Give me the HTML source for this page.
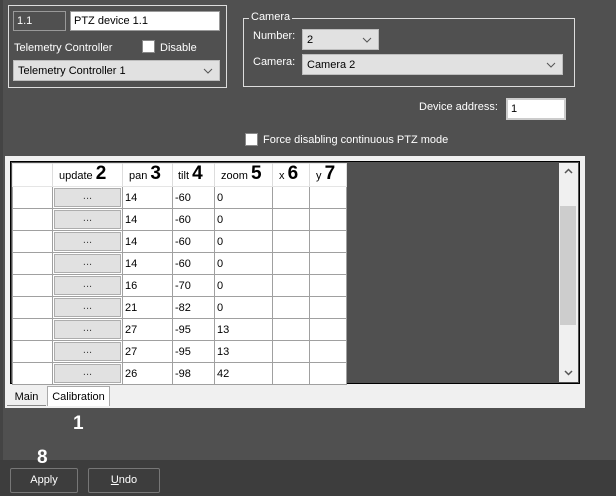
<!DOCTYPE html><html><head><style>
*{margin:0;padding:0;box-sizing:border-box}
body{width:616px;height:496px;background:#505050;position:relative;overflow:hidden;font-family:"Liberation Sans",sans-serif;font-size:11px;color:#fff}
.a{position:absolute}
.inp{position:absolute;background:#fff;border:1px solid #9a9a9a;color:#000;padding:2px 3px;font-size:11px;line-height:14px}
.cb{position:absolute;background:#e1e1e1;border:1px solid #bdbdbd;color:#000;padding:3px 4px;font-size:11px;line-height:14px}
.cb svg{position:absolute;right:6px;top:7px}
.chk{position:absolute;width:13px;height:13px;background:#fff;border:1px solid #888}
.n{position:absolute;font-weight:bold;font-size:19px;color:#000;line-height:19px}
table{border-collapse:collapse;position:absolute;left:12px;top:163px;color:#000;font-size:11px}
td{border:1px solid #a0a0a0;height:22px;background:#fff;padding:0 2px;line-height:20px}
td.b{background:#fff;padding:1px}
td.b div{background:#e1e1e1;border:1px solid #adadad;height:19px;text-align:center;color:#444;line-height:14px}
tr.h td{height:21px;line-height:19px;border-color:#e5e5e5;border-right:1px solid #ddd}
.btn{position:absolute;border:1px solid #777;background:#3d3d3d;color:#fff;text-align:center;line-height:22px;border-radius:2px}
</style></head><body>
<div class="a" style="left:0;top:0;width:3px;height:496px;background:#444"></div>
<div class="a" style="left:8px;top:5px;width:219px;height:83px;border:1px solid #ddd"></div>
<div class="inp" style="left:13px;top:11px;width:53px;height:20px;background:#505050;color:#fff;border-color:#999">1.1</div>
<div class="inp" style="left:70px;top:11px;width:150px;height:20px">PTZ device 1.1</div>
<div class="a" style="left:14px;top:42px">Telemetry Controller</div>
<div class="chk" style="left:142px;top:40px"></div>
<div class="a" style="left:160px;top:42px">Disable</div>
<div class="cb" style="left:13px;top:60px;width:207px;height:21px">Telemetry Controller 1<svg width="10" height="6"><path d="M1 1l4 4 4-4" stroke="#555" fill="none"/></svg></div>

<div class="a" style="left:243px;top:18px;width:332px;height:69px;border:1px solid #ddd"></div>
<div class="a" style="left:249px;top:11px;background:#505050;padding:0 2px">Camera</div>
<div class="a" style="left:253px;top:30px">Number:</div>
<div class="cb" style="left:302px;top:29px;width:77px;height:21px">2<svg width="10" height="6"><path d="M1 1l4 4 4-4" stroke="#555" fill="none"/></svg></div>
<div class="a" style="left:253px;top:56px">Camera:</div>
<div class="cb" style="left:302px;top:54px;width:261px;height:21px">Camera 2<svg width="10" height="6"><path d="M1 1l4 4 4-4" stroke="#555" fill="none"/></svg></div>
<div class="a" style="left:419px;top:101px">Device address:</div>
<div class="inp" style="left:506px;top:98px;width:60px;height:22px;border:2px solid #ccc">1</div>
<div class="chk" style="left:245px;top:133px"></div>
<div class="a" style="left:263px;top:134px">Force disabling continuous PTZ mode</div>

<div class="a" style="left:5px;top:156px;width:580px;height:252px;background:#f0f0f0"></div>
<div class="a" style="left:10px;top:161px;width:570px;height:223px;background:#505050;border:1px solid #000"></div>
<table>
<tr class="h"><td style="width:40px"></td><td style="width:70px;padding-left:6px">update <b style="font-size:19px">2</b></td><td style="width:50px;padding-left:6px">pan <b style="font-size:19px">3</b></td><td style="width:42px;padding-left:5px">tilt <b style="font-size:19px">4</b></td><td style="width:58px;padding-left:6px">zoom <b style="font-size:19px">5</b></td><td style="width:37px;padding-left:6px">x <b style="font-size:19px">6</b></td><td style="width:37px;padding-left:6px">y <b style="font-size:19px">7</b></td></tr>
<tr><td></td><td class="b"><div>...</div></td><td>14</td><td>-60</td><td>0</td><td></td><td></td></tr>
<tr><td></td><td class="b"><div>...</div></td><td>14</td><td>-60</td><td>0</td><td></td><td></td></tr>
<tr><td></td><td class="b"><div>...</div></td><td>14</td><td>-60</td><td>0</td><td></td><td></td></tr>
<tr><td></td><td class="b"><div>...</div></td><td>14</td><td>-60</td><td>0</td><td></td><td></td></tr>
<tr><td></td><td class="b"><div>...</div></td><td>16</td><td>-70</td><td>0</td><td></td><td></td></tr>
<tr><td></td><td class="b"><div>...</div></td><td>21</td><td>-82</td><td>0</td><td></td><td></td></tr>
<tr><td></td><td class="b"><div>...</div></td><td>27</td><td>-95</td><td>13</td><td></td><td></td></tr>
<tr><td></td><td class="b"><div>...</div></td><td>27</td><td>-95</td><td>13</td><td></td><td></td></tr>
<tr><td></td><td class="b"><div>...</div></td><td>26</td><td>-98</td><td>42</td><td></td><td></td></tr>
</table>
<div class="a" style="left:559px;top:163px;width:19px;height:219px;background:#f0f0f0"></div>
<div class="a" style="left:560px;top:206px;width:16px;height:119px;background:#cdcdcd"></div>
<svg class="a" style="left:564px;top:168px" width="9" height="6"><path d="M1 5l3.5-3.5L8 5" stroke="#555" fill="none" stroke-width="1.5"/></svg>
<svg class="a" style="left:564px;top:370px" width="9" height="6"><path d="M1 1l3.5 3.5L8 1" stroke="#555" fill="none" stroke-width="1.5"/></svg>

<div class="a" style="left:7px;top:388px;width:39px;height:18px;color:#000;text-align:center;line-height:18px;border-bottom:1px solid #888">Main</div>
<div class="a" style="left:47px;top:386px;width:63px;height:20px;background:#fff;border:1px solid #aaa;border-bottom:none;color:#000;text-align:center;line-height:20px">Calibration</div>
<div class="n" style="left:73px;top:414px;color:#fff">1</div>
<div class="a" style="left:0;top:460px;width:616px;height:36px;background:#3d3d3d"></div>
<div class="n" style="left:37px;top:448px;color:#fff">8</div>
<div class="btn" style="left:10px;top:468px;width:68px;height:25px">Apply</div>
<div class="btn" style="left:88px;top:468px;width:72px;height:25px"><u>U</u>ndo</div>
</body></html>
